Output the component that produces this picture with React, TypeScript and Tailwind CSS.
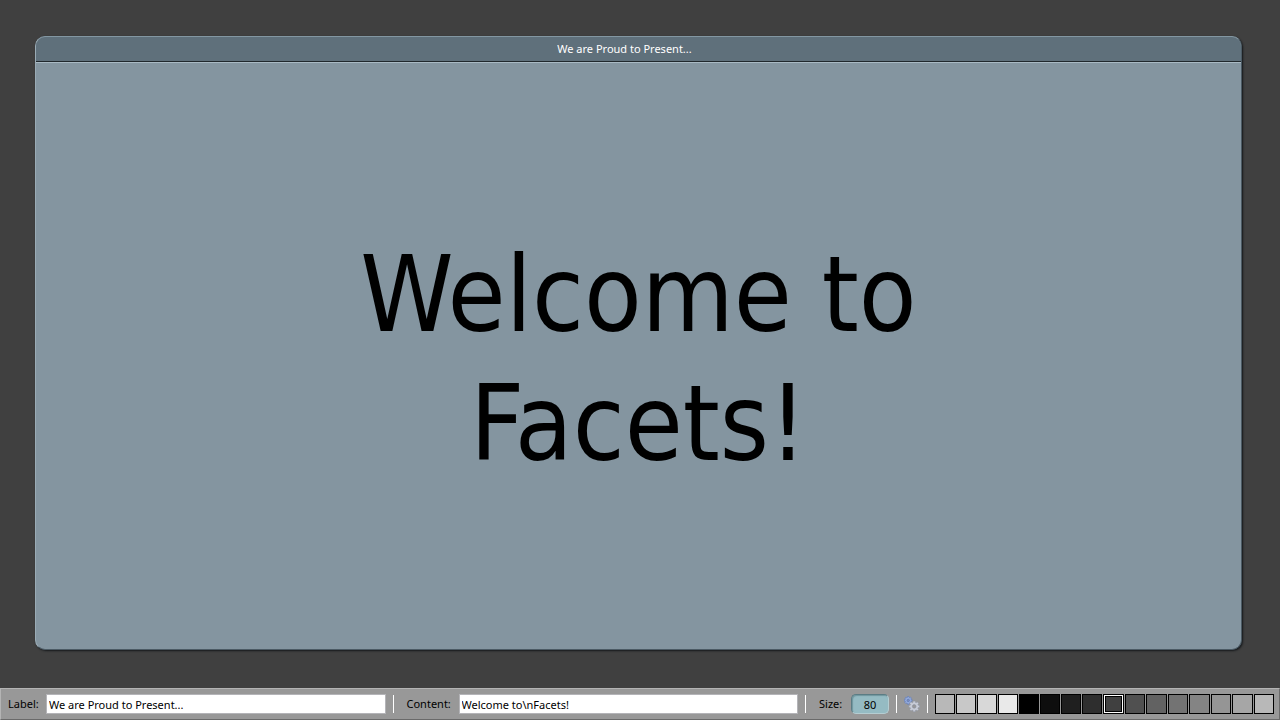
import { useState } from "react";

const swatches = [
  "#b8b8b8", "#c8c8c8", "#d8d8d8", "#e9e9e9", "#000000", "#0e0e0e", "#1f1f1f", "#2e2e2e",
  "#404040", "#505050", "#626262", "#737373", "#848484", "#959595", "#a6a6a6", "#b8b8b8",
];

const fieldClass =
  "h-5 min-w-0 flex-1 border border-[#b4b4b8] bg-white px-[2px] pt-px text-black outline-none";

function Separator() {
  return <div className="h-[18px] w-px shrink-0 bg-white" />;
}

function teeth(cx: number, cy: number, outer: number, inner: number, count: number) {
  const points: string[] = [];
  for (let i = 0; i < count; i++) {
    const step = (Math.PI * 2) / count;
    for (const [offset, radius] of [[-0.34, inner], [-0.24, outer], [0.24, outer], [0.34, inner]]) {
      const angle = (i + offset) * step;
      points.push(`${cx + Math.cos(angle) * radius},${cy + Math.sin(angle) * radius}`);
    }
  }
  return points.join(" ");
}

function GearsIcon() {
  return (
    <svg viewBox="0 0 16 16" className="block h-4 w-4" aria-hidden="true">
      <polygon points={teeth(4.2, 4.4, 4, 3.1, 8)} fill="#94abdc" stroke="#5f7cba" strokeWidth="0.6" />
      <circle cx="4.2" cy="4.4" r="1.2" fill="#8090b8" stroke="#5672b0" strokeWidth="0.6" />
      <polygon points={teeth(10.2, 10.4, 5.4, 4.2, 8)} fill="#c8ccd6" stroke="#8f96a8" strokeWidth="0.5" />
      <circle cx="10.2" cy="10.4" r="1.8" fill="#989898" stroke="#858c9e" strokeWidth="0.6" />
    </svg>
  );
}

export default function App() {
  const [label, setLabel] = useState("We are Proud to Present...");
  const [content, setContent] = useState("Welcome to\\nFacets!");
  const [size, setSize] = useState("80");
  const [selected, setSelected] = useState(8);

  return (
    <div
      className="flex min-h-screen flex-col font-['DejaVu_Sans_Condensed','DejaVu_Sans',sans-serif] text-[11px] leading-[14px]"
      style={{ backgroundColor: swatches[selected] }}
    >
      <main className="flex flex-1 flex-col pt-9 pr-[38px] pb-[38px] pl-[35px]">
        <section className="flex flex-1 flex-col overflow-hidden rounded-[10px] border border-t-[#8397a2] border-r-[#4b5a64] border-b-[#4b5a64] border-l-[#9aabb5] bg-[#8495a0] shadow-[1px_1px_2px_#15181b]">
          <header className="flex h-[25px] items-center justify-center border-b border-[#20282d] bg-[#5f707b] pr-7 font-['Noto_Sans',sans-serif] text-white">
            {label}
          </header>
          <div className="flex flex-1 items-center justify-center border-t border-[#a9bac4] pt-2">
            <h1 className="text-center text-[105px] leading-[129px] whitespace-pre-line text-black">
              {content.replace(/\\n/g, "\n")}
            </h1>
          </div>
        </section>
      </main>

      <form className="flex h-8 items-center border border-t-[#b4b4b4] border-r-[#6a6a6a] border-b-[#6a6a6a] border-l-[#b4b4b4] bg-[#989898] pr-[5px] pl-[7px] font-['Noto_Sans',sans-serif] text-black">
        <label htmlFor="label" className="w-[38px] shrink-0">Label:</label>
        <input id="label" className={fieldClass} value={label} onChange={(e) => setLabel(e.target.value)} />
        <div className="ml-[7px]"><Separator /></div>
        <label htmlFor="content" className="ml-[13px] w-[52px] shrink-0">Content:</label>
        <input id="content" className={fieldClass} value={content} onChange={(e) => setContent(e.target.value)} />
        <div className="ml-[7px]"><Separator /></div>
        <label htmlFor="size" className="ml-[13px] w-8 shrink-0">Size:</label>
        <input
          id="size"
          className="h-5 w-[38px] shrink-0 rounded-[5px] border border-t-[#5b7c84] border-r-[#b5cdd2] border-b-[#b5cdd2] border-l-[#5b7c84] bg-[#95bbc3] text-center shadow-[inset_1px_1px_1px_#6f969e] outline-none"
          value={size}
          onChange={(e) => setSize(e.target.value)}
        />
        <div className="ml-[7px]"><Separator /></div>
        <button type="button" aria-label="Settings" className="mx-[7px] shrink-0">
          <GearsIcon />
        </button>
        <Separator />
        <div className="ml-[7px] flex h-5 w-[339px] shrink-0 gap-px">
          {swatches.map((color, i) => (
            <button
              key={i}
              type="button"
              aria-label={`Background ${color}`}
              aria-pressed={i === selected}
              onClick={() => setSelected(i)}
              className={
                i === selected
                  ? "w-[21px] shrink-0 border border-black bg-white p-px"
                  : i < 8
                    ? "w-5 shrink-0 border border-black"
                    : "min-w-0 flex-1 border border-black"
              }
              style={i === selected ? undefined : { backgroundColor: color }}
            >
              {i === selected && (
                <span className="block h-full w-full border border-black" style={{ backgroundColor: color }} />
              )}
            </button>
          ))}
        </div>
      </form>
    </div>
  );
}
